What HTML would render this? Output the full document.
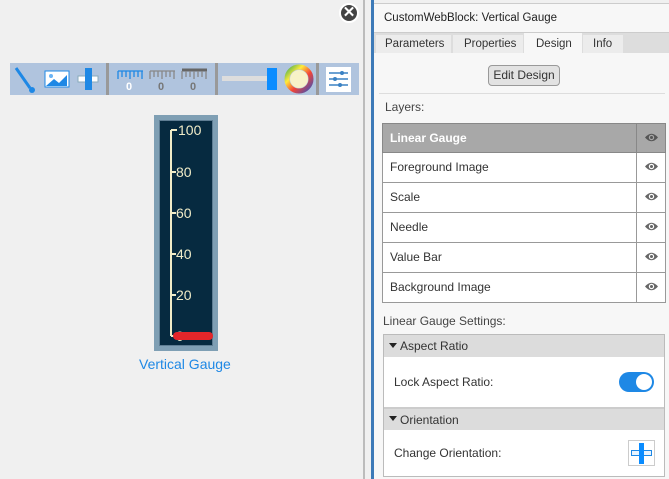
<!DOCTYPE html>
<html><head><style>
*{box-sizing:border-box;margin:0;padding:0}
body{width:669px;height:479px;overflow:hidden;background:#f0f0f0;font-family:"Liberation Sans",sans-serif;position:relative;font-size:12px;color:#333}
.abs{position:absolute}
.row{position:absolute;left:382px;width:284px;height:30px;border:1px solid #999;border-top:none;background:#fff}
.row span{position:absolute;left:7px;top:7px}
.row i{position:absolute;left:253px;top:0;bottom:0;border-left:1px solid #999;width:30px}
.row svg,.hd svg{position:absolute;left:7px;top:8px}
</style></head><body>
<div class="abs" style="left:363px;top:0;width:2px;height:479px;background:#bcbcbc"></div>
<div class="abs" style="left:371px;top:0;width:3px;height:479px;background:#3d7ab8"></div>
<div class="abs" style="left:374px;top:0;width:295px;height:479px;background:#f7f7f7"></div>
<div class="abs" style="left:339px;top:3px;width:20px;height:20px;border-radius:50%;background:#444;border:2px solid #fff;color:#fff;font-size:15px;font-weight:bold;text-align:center;line-height:16px">✕</div>
<div class="abs" style="left:10px;top:63px;width:349px;height:32px;background:#b0c4de"></div>
<svg class="abs" style="left:10px;top:63px" width="349" height="32">
<line x1="6" y1="5" x2="20" y2="25" stroke="#1e88e5" stroke-width="3"/><circle cx="22" cy="27" r="3" fill="#1e88e5"/>
<rect x="35" y="8" width="24" height="16" fill="#fff" stroke="#1e88e5"/><circle cx="41" cy="13" r="2" fill="#6ab4f5"/><path d="M36 23 L44 16 L49 20 L57 12 L57 23Z" fill="#1e88e5"/>
<rect x="68" y="13" width="20" height="6" fill="#fff" stroke="#8ab"/><rect x="75" y="5" width="7" height="22" fill="#1e88e5"/>
<rect x="96" y="0" width="3" height="32" fill="#999"/>
<path d="M108 8h25M108 8v8M112 8v6M116 8v6M120 8v8M124 8v6M128 8v6M132 8v8" stroke="#1e88e5" stroke-width="1.3" fill="none"/><text x="116" y="27" font-size="11" font-weight="bold" fill="#fff">0</text>
<path d="M140 8h25M140 8v8M144 8v6M148 8v6M152 8v8M156 8v6M160 8v6M164 8v8" stroke="#888" stroke-width="1.3" fill="none"/><text x="148" y="27" font-size="11" font-weight="bold" fill="#777">0</text>
<path d="M172 7h25" stroke="#666" stroke-width="3"/><path d="M172 8v8M176 8v6M180 8v6M184 8v8M188 8v6M192 8v6M196 8v8" stroke="#888" stroke-width="1.3" fill="none"/><text x="180" y="27" font-size="11" font-weight="bold" fill="#777">0</text>
<rect x="205" y="0" width="3" height="32" fill="#999"/>
<rect x="212" y="13" width="50" height="5" fill="#ddd"/><rect x="257" y="5" width="10" height="22" fill="#0a8cff"/>
<defs><linearGradient id="g" x1="0" y1="0" x2="1" y2="1"><stop offset="0" stop-color="#4caf50"/><stop offset=".3" stop-color="#ffeb3b"/><stop offset=".6" stop-color="#f44336"/><stop offset="1" stop-color="#3f51b5"/></linearGradient></defs>
<circle cx="289" cy="16" r="12" fill="none" stroke="url(#g)" stroke-width="5"/>
<circle cx="289" cy="16" r="9" fill="#f8f2c8"/>
<rect x="306" y="0" width="3" height="32" fill="#999"/>
<rect x="316" y="4" width="25" height="25" fill="#fff"/>
<path d="M319 10h19M319 16h19M319 22h19" stroke="#3b82c4" stroke-width="1.5"/><circle cx="332" cy="10" r="2" fill="#3b82c4"/><circle cx="325" cy="16" r="2" fill="#3b82c4"/><circle cx="330" cy="22" r="2" fill="#3b82c4"/>
</svg>
<div class="abs" style="left:154px;top:115px;width:64px;height:236px;background:#7f9fb4"></div>
<div class="abs" style="left:159px;top:120px;width:54px;height:226px;background:#062a40;border:1px solid #5e7d93"></div>
<svg class="abs" style="left:159px;top:120px" width="54" height="226">
<path d="M12 10V216M12 10h6M12 52h5M12 93h5M12 134h5M12 175h5M12 216h5" stroke="#f0ecc8" stroke-width="2" fill="none"/>
<g fill="#f0ecc8" font-size="14" font-family="Liberation Sans"><text x="19" y="15">100</text><text x="17" y="57">80</text><text x="17" y="98">60</text><text x="17" y="139">40</text><text x="17" y="180">20</text><text x="17" y="221">0</text></g>
<rect x="14" y="212" width="40" height="8" rx="4" fill="#e4262a"/>
</svg>
<div class="abs" style="left:139px;top:356px;font-size:14px;color:#1e88e5">Vertical Gauge</div>
<div class="abs" style="left:374px;top:0;width:295px;height:4px;border-bottom:1px solid #ccc;background:#f0f0f0"></div>
<div class="abs" style="left:384px;top:12px;font-size:11.5px;color:#222">CustomWebBlock: Vertical Gauge</div>
<div class="abs" style="left:374px;top:32px;width:295px;height:21px;background:#ddd;border-top:1px solid #ccc"></div>
<div class="abs" style="left:376px;top:35px;width:75px;height:18px;background:#ececec;padding:3px 0 0 9px;font-size:11.5px">Parameters</div>
<div class="abs" style="left:453px;top:35px;width:70px;height:18px;background:#ececec;padding:3px 0 0 11px;font-size:11.5px">Properties</div>
<div class="abs" style="left:524px;top:33px;width:58px;height:20px;background:#f7f7f7;padding:5px 0 0 12px;font-size:11.5px">Design</div>
<div class="abs" style="left:583px;top:35px;width:40px;height:18px;background:#ececec;padding:3px 0 0 10px;font-size:11.5px">Info</div>
<div class="abs" style="left:488px;top:65px;width:72px;height:21px;border:1px solid #999;border-radius:4px;background:#e2e2e2;font-size:12px;text-align:center;line-height:19px">Edit Design</div>
<div class="abs" style="left:379px;top:93px;width:286px;height:1px;background:#ddd"></div>
<div class="abs" style="left:385px;top:100px;color:#444">Layers:</div>
<div class="abs hd" style="left:382px;top:123px;width:284px;height:30px;background:#a8a8a8;border:1px solid #888">
<span style="position:absolute;left:7px;top:7px;color:#fff;font-weight:bold">Linear Gauge</span><i style="position:absolute;left:253px;top:0;bottom:0;border-left:1px solid #888;width:30px"><svg width="15" height="11"><path d="M1 5.5Q7.5 -2 14 5.5Q7.5 13 1 5.5Z" fill="#555"/><circle cx="7.5" cy="5.5" r="2.7" fill="#a8a8a8"/><circle cx="7.5" cy="5.5" r="1.5" fill="#555"/></svg></i></div>
<div class="row" style="top:153px"><span>Foreground Image</span><i><svg width="15" height="11"><path d="M1 5.5Q7.5 -2 14 5.5Q7.5 13 1 5.5Z" fill="#666"/><circle cx="7.5" cy="5.5" r="2.7" fill="#fff"/><circle cx="7.5" cy="5.5" r="1.5" fill="#666"/></svg></i></div>
<div class="row" style="top:183px"><span>Scale</span><i><svg width="15" height="11"><path d="M1 5.5Q7.5 -2 14 5.5Q7.5 13 1 5.5Z" fill="#666"/><circle cx="7.5" cy="5.5" r="2.7" fill="#fff"/><circle cx="7.5" cy="5.5" r="1.5" fill="#666"/></svg></i></div>
<div class="row" style="top:213px"><span>Needle</span><i><svg width="15" height="11"><path d="M1 5.5Q7.5 -2 14 5.5Q7.5 13 1 5.5Z" fill="#666"/><circle cx="7.5" cy="5.5" r="2.7" fill="#fff"/><circle cx="7.5" cy="5.5" r="1.5" fill="#666"/></svg></i></div>
<div class="row" style="top:243px"><span>Value Bar</span><i><svg width="15" height="11"><path d="M1 5.5Q7.5 -2 14 5.5Q7.5 13 1 5.5Z" fill="#666"/><circle cx="7.5" cy="5.5" r="2.7" fill="#fff"/><circle cx="7.5" cy="5.5" r="1.5" fill="#666"/></svg></i></div>
<div class="row" style="top:273px"><span>Background Image</span><i><svg width="15" height="11"><path d="M1 5.5Q7.5 -2 14 5.5Q7.5 13 1 5.5Z" fill="#666"/><circle cx="7.5" cy="5.5" r="2.7" fill="#fff"/><circle cx="7.5" cy="5.5" r="1.5" fill="#666"/></svg></i></div>
<div class="abs" style="left:383px;top:314px;color:#444">Linear Gauge Settings:</div>
<div class="abs" style="left:383px;top:334px;width:282px;height:143px;border:1px solid #bbb;background:#fff"></div>
<div class="abs" style="left:384px;top:335px;width:280px;height:22px;background:#dcdcdc;padding:4px 0 0 16px;font-size:12px">Aspect Ratio</div>
<div class="abs" style="left:389px;top:343px;border:4px solid transparent;border-top:5px solid #222;border-bottom:none"></div>
<div class="abs" style="left:394px;top:375px">Lock Aspect Ratio:</div>
<div class="abs" style="left:619px;top:372px;width:35px;height:20px;border-radius:10px;background:#1e88e5"><div style="position:absolute;right:2px;top:2px;width:16px;height:16px;border-radius:50%;background:#fff"></div></div>
<div class="abs" style="left:384px;top:407px;width:280px;height:23px;background:#dcdcdc;border-top:2px solid #ccc;padding:4px 0 0 16px;font-size:12px">Orientation</div>
<div class="abs" style="left:389px;top:416px;border:4px solid transparent;border-top:5px solid #222;border-bottom:none"></div>
<div class="abs" style="left:394px;top:446px">Change Orientation:</div>
<div class="abs" style="left:628px;top:440px;width:27px;height:26px;border:1px solid #ccc;background:#fff">
<div style="position:absolute;left:2px;top:9px;width:21px;height:6px;border:1px solid #1e88e5;background:#e8f4ff"></div>
<div style="position:absolute;left:10px;top:2px;width:5px;height:21px;background:#0a8cff"></div></div>
</body></html>
